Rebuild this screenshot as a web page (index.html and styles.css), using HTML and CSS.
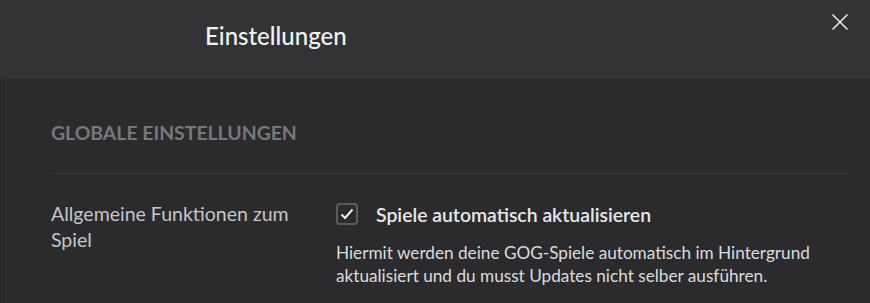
FILE: index.html
```html
<!DOCTYPE html>
<html lang="de">
<head>
<meta charset="utf-8">
<link rel="stylesheet" href="styles.css">
</head>
<body>
<div class="app">
  <header class="top">
    <h1 class="title">Einstellungen</h1>
    <button class="close" aria-label="Schließen">
      <svg width="18" height="18" viewBox="0 0 18 18"><path d="M1.5 1.5 L16.5 16.5 M16.5 1.5 L1.5 16.5" stroke="#e6e6e6" stroke-width="1.6" fill="none"/></svg>
    </button>
  </header>
  <main class="body">
    <div class="rail"></div>
    <section class="content">
      <h2 class="section-title">GLOBALE EINSTELLUNGEN</h2>
      <div class="divider"></div>
      <div class="row">
        <div class="label">Allgemeine Funktionen zum Spiel</div>
        <div class="option">
          <label class="check">
            <span class="box">
              <svg width="14" height="12" viewBox="0 0 14 12"><path d="M1.5 6.5 L5 10 L12.5 1.5" stroke="#f2f2f2" stroke-width="2" fill="none"/></svg>
            </span>
            <span class="check-text">Spiele automatisch aktualisieren</span>
          </label>
          <p class="desc">Hiermit werden deine GOG-Spiele automatisch im Hintergrund aktualisiert und du musst Updates nicht selber ausführen.</p>
        </div>
      </div>
    </section>
  </main>
</div>
</body>
</html>
```

FILE: styles.css
```css
* { box-sizing: border-box; }
html, body { margin: 0; padding: 0; }
body {
  width: 870px;
  height: 303px;
  overflow: hidden;
  background: #2b2b2d;
  font-family: Lato, "Open Sans", sans-serif;
}
.app { display: flex; flex-direction: column; height: 303px; }
.top {
  height: 79px;
  background: #333335;
  display: flex;
  align-items: flex-start;
  position: relative;
}
.title {
  margin: 0;
  padding: 20px 0 0 205px;
  font-size: 24px;
  font-weight: 500;
  color: #f2f2f4;
  line-height: 32px;
}
.close {
  position: absolute;
  right: 21px;
  top: 13px;
  width: 18px;
  height: 18px;
  padding: 0;
  border: 0;
  background: none;
  display: flex;
}
.body { flex: 1; display: flex; }
.rail {
  width: 7px;
  border-right: 1px solid #323234;
  background: #2b2b2d;
}
.content {
  flex: 1;
  padding: 0 22px 0 44px;
}
.section-title {
  margin: 0;
  padding-top: 42px;
  font-size: 19.4px;
  line-height: 23px;
  font-weight: 700;
  color: #78787a;
}
.divider {
  margin-top: 29px;
  height: 1px;
  background: #39393b;
}
.row {
  display: flex;
  padding-top: 27px;
}
.label {
  width: 285px;
  font-size: 19.5px;
  line-height: 26px;
  color: #c6c6c8;
  padding-right: 20px;
}
.option { flex: 1; }
.check {
  display: flex;
  align-items: center;
  gap: 18px;
  height: 26px;
}
.box {
  width: 22px;
  height: 22px;
  border: 2px solid #5c5c5e;
  border-radius: 4px;
  display: flex;
  align-items: center;
  justify-content: center;
}
.check-text {
  font-size: 19.4px;
  font-weight: 600;
  color: #e8e8ea;
}
.desc {
  margin: 14px 0 0;
  font-size: 17.2px;
  line-height: 23px;
  color: #dcdcde;
}
```
